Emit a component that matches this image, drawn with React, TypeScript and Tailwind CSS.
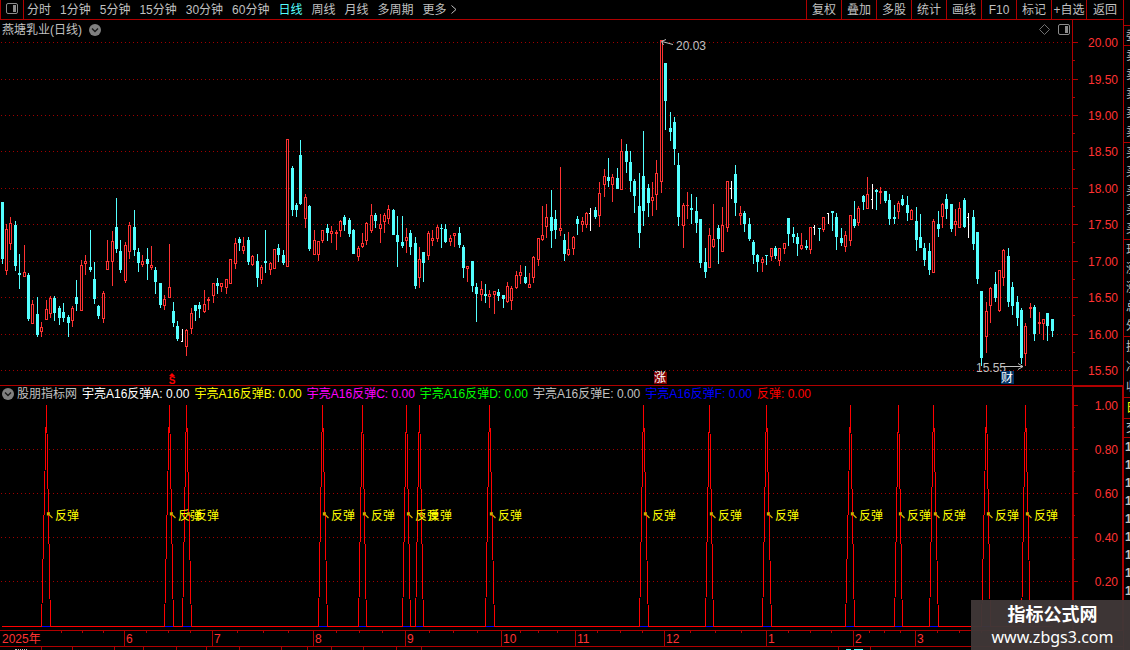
import React from "react";

type Kind = "u" | "d" | "w";
/* kind, x, high, low, body top, body bottom */
type Candle = [Kind, number, number, number, number, number];

const candles: Candle[] = [
  ["d", 2, 202, 264, 202, 259], ["u", 6, 224, 275, 229, 271], ["u", 10, 217, 250, 223, 244], ["d", 15, 221, 271, 225, 266],
  ["d", 19, 254, 289, 273, 275], ["u", 24, 245, 277, 272, 277], ["d", 28, 273, 321, 275, 319], ["u", 32, 300, 324, 304, 324],
  ["d", 37, 297, 337, 314, 335], ["u", 41, 322, 337, 327, 332], ["u", 46, 300, 320, 309, 320], ["u", 50, 296, 318, 298, 314],
  ["d", 54, 296, 321, 298, 313], ["d", 59, 306, 325, 308, 318], ["d", 63, 303, 322, 312, 318], ["d", 68, 315, 337, 317, 323],
  ["u", 72, 306, 327, 308, 321], ["d", 76, 280, 311, 297, 304], ["u", 81, 260, 311, 265, 311], ["u", 85, 255, 275, 261, 264],
  ["d", 90, 230, 272, 267, 270], ["d", 94, 262, 304, 279, 299], ["d", 98, 305, 319, 306, 316], ["u", 103, 291, 323, 293, 319],
  ["u", 107, 240, 270, 261, 270], ["u", 112, 231, 286, 241, 262], ["d", 116, 198, 253, 227, 249], ["d", 120, 240, 273, 251, 270],
  ["u", 125, 242, 283, 245, 281], ["u", 129, 222, 259, 225, 252], ["d", 134, 210, 256, 227, 250], ["d", 138, 248, 272, 252, 263],
  ["u", 142, 255, 267, 261, 265], ["d", 147, 248, 280, 259, 264], ["u", 151, 246, 270, 265, 268], ["d", 155, 267, 294, 270, 282],
  ["d", 160, 283, 308, 283, 305], ["u", 164, 295, 310, 299, 306], ["u", 169, 244, 298, 287, 298], ["d", 173, 302, 327, 311, 323],
  ["d", 177, 321, 341, 326, 339], ["w", 182, 329, 342, 341, 342], ["u", 186, 329, 356, 330, 347], ["u", 191, 308, 334, 313, 329],
  ["d", 195, 305, 321, 305, 311], ["d", 199, 302, 318, 305, 309], ["u", 204, 290, 313, 304, 312], ["u", 208, 297, 310, 299, 301],
  ["u", 213, 283, 303, 283, 296], ["d", 217, 278, 294, 283, 286], ["u", 221, 283, 292, 283, 287], ["u", 226, 279, 294, 279, 288],
  ["u", 230, 259, 284, 259, 284], ["u", 235, 238, 269, 243, 264], ["d", 239, 237, 251, 239, 243], ["u", 243, 237, 254, 246, 251],
  ["d", 248, 237, 265, 240, 262], ["u", 252, 255, 266, 256, 265], ["d", 257, 254, 287, 261, 278], ["u", 261, 265, 284, 267, 280],
  ["d", 265, 230, 273, 261, 263], ["u", 270, 262, 275, 263, 270], ["u", 274, 249, 269, 249, 269], ["d", 278, 244, 262, 248, 255],
  ["d", 283, 250, 265, 255, 263], ["u", 287, 139, 267, 139, 267], ["d", 292, 166, 216, 168, 210], ["d", 296, 203, 217, 205, 210],
  ["d", 300, 140, 205, 155, 204], ["u", 305, 194, 228, 197, 219], ["d", 309, 205, 251, 206, 249], ["u", 314, 230, 255, 240, 255],
  ["u", 318, 241, 261, 241, 255], ["u", 322, 230, 243, 230, 241], ["d", 327, 224, 241, 228, 233], ["u", 331, 226, 243, 231, 234],
  ["u", 336, 230, 250, 232, 234], ["u", 340, 220, 237, 221, 231], ["d", 344, 215, 231, 217, 225], ["d", 349, 218, 237, 220, 234],
  ["d", 353, 229, 254, 230, 254], ["u", 358, 246, 261, 248, 257], ["u", 362, 233, 248, 243, 247], ["u", 366, 222, 245, 223, 241],
  ["u", 371, 204, 233, 215, 231], ["d", 375, 213, 228, 215, 221], ["u", 380, 214, 243, 224, 229], ["u", 384, 213, 233, 215, 222],
  ["u", 388, 205, 224, 209, 219], ["d", 393, 209, 235, 210, 235], ["d", 397, 216, 267, 235, 242], ["d", 402, 216, 248, 242, 246],
  ["u", 406, 228, 253, 237, 241], ["d", 410, 230, 255, 233, 247], ["d", 415, 237, 289, 243, 286], ["u", 419, 247, 288, 259, 278],
  ["d", 423, 252, 282, 252, 263], ["u", 428, 231, 260, 233, 256], ["u", 432, 230, 246, 238, 241], ["u", 437, 225, 242, 227, 239],
  ["d", 441, 224, 248, 228, 229], ["d", 445, 224, 243, 229, 242], ["u", 450, 235, 246, 238, 242], ["u", 454, 233, 247, 233, 236],
  ["d", 459, 227, 248, 233, 245], ["d", 463, 245, 278, 247, 268], ["u", 467, 266, 282, 266, 269], ["d", 472, 261, 292, 261, 286],
  ["d", 476, 283, 322, 287, 294], ["u", 481, 281, 301, 289, 295], ["d", 485, 284, 303, 294, 296], ["u", 489, 290, 308, 294, 297],
  ["u", 494, 291, 314, 291, 295], ["d", 498, 289, 301, 292, 296], ["d", 503, 295, 308, 295, 299], ["u", 507, 282, 303, 286, 302],
  ["u", 511, 286, 310, 288, 301], ["u", 516, 271, 289, 275, 288], ["u", 520, 265, 284, 272, 276], ["d", 525, 266, 284, 277, 283],
  ["u", 529, 273, 288, 284, 288], ["u", 533, 256, 283, 257, 278], ["u", 538, 238, 266, 238, 260], ["u", 542, 206, 241, 235, 240],
  ["u", 546, 204, 238, 217, 227], ["d", 551, 190, 248, 217, 231], ["d", 555, 210, 239, 219, 230], ["u", 560, 167, 236, 228, 231],
  ["d", 564, 234, 261, 240, 254], ["u", 568, 232, 256, 249, 255], ["u", 573, 236, 255, 237, 249], ["d", 577, 216, 235, 219, 224],
  ["u", 582, 217, 232, 221, 225], ["u", 586, 212, 228, 213, 225], ["w", 590, 208, 231, 213, 214], ["d", 595, 207, 219, 210, 217],
  ["u", 599, 182, 227, 193, 216], ["u", 604, 169, 197, 176, 185], ["d", 608, 158, 187, 177, 181], ["u", 612, 174, 202, 177, 185],
  ["d", 617, 168, 189, 178, 189], ["u", 621, 139, 190, 151, 190], ["d", 626, 144, 173, 151, 162], ["d", 630, 151, 192, 162, 181],
  ["d", 634, 179, 213, 181, 196], ["d", 639, 173, 248, 206, 233], ["d", 643, 131, 226, 176, 211], ["d", 648, 184, 217, 188, 203],
  ["u", 652, 182, 216, 197, 201], ["u", 656, 160, 210, 173, 195], ["u", 661, 40, 193, 40, 182], ["d", 665, 63, 130, 63, 101],
  ["d", 670, 112, 141, 128, 132], ["d", 674, 117, 165, 122, 149], ["d", 678, 153, 226, 165, 217], ["u", 683, 203, 248, 205, 226],
  ["u", 687, 192, 219, 205, 206], ["d", 691, 194, 224, 208, 210], ["d", 696, 197, 233, 211, 223], ["d", 700, 219, 268, 219, 263],
  ["d", 705, 248, 278, 262, 272], ["u", 709, 228, 268, 235, 268], ["u", 713, 204, 248, 239, 247], ["d", 718, 225, 264, 228, 239],
  ["u", 722, 207, 252, 225, 252], ["u", 727, 181, 232, 181, 228], ["w", 731, 181, 199, 188, 189], ["d", 735, 165, 216, 174, 203],
  ["u", 740, 206, 225, 213, 216], ["d", 744, 211, 232, 213, 224], ["d", 749, 218, 241, 224, 239], ["d", 753, 240, 264, 242, 255],
  ["d", 757, 254, 272, 255, 262], ["u", 762, 257, 272, 259, 263], ["d", 766, 255, 265, 255, 256], ["u", 771, 248, 261, 248, 257],
  ["d", 775, 246, 259, 248, 256], ["u", 779, 248, 266, 248, 261], ["u", 784, 243, 254, 243, 249], ["d", 788, 218, 246, 218, 234],
  ["d", 793, 227, 243, 234, 237], ["d", 797, 233, 256, 237, 244], ["u", 801, 233, 250, 245, 249], ["d", 806, 240, 250, 246, 248],
  ["u", 810, 227, 254, 227, 250], ["w", 814, 225, 235, 227, 228], ["d", 819, 228, 241, 228, 229], ["u", 823, 217, 232, 217, 230],
  ["w", 828, 213, 224, 213, 214], ["d", 832, 211, 231, 211, 213], ["d", 836, 213, 250, 217, 237], ["d", 841, 228, 246, 238, 243],
  ["u", 845, 231, 252, 235, 247], ["u", 850, 215, 246, 215, 241], ["d", 854, 201, 228, 219, 226], ["u", 858, 206, 226, 208, 223],
  ["d", 863, 195, 210, 196, 202], ["u", 867, 177, 209, 194, 209], ["w", 872, 184, 209, 199, 200], ["d", 876, 189, 210, 190, 192],
  ["u", 880, 187, 204, 191, 193], ["d", 885, 191, 203, 191, 201], ["d", 889, 194, 225, 200, 219], ["d", 894, 205, 224, 217, 219],
  ["u", 898, 201, 219, 203, 212], ["d", 902, 195, 206, 199, 205], ["d", 907, 196, 221, 205, 213], ["u", 911, 209, 220, 210, 220],
  ["d", 916, 207, 251, 221, 240], ["d", 920, 214, 248, 237, 248], ["d", 924, 243, 266, 248, 260], ["d", 929, 243, 275, 251, 270],
  ["u", 933, 219, 273, 221, 273], ["d", 938, 211, 237, 224, 229], ["u", 942, 203, 228, 204, 217], ["d", 946, 194, 219, 199, 209],
  ["d", 951, 204, 232, 204, 229], ["u", 955, 209, 236, 221, 225], ["u", 959, 202, 228, 208, 228], ["d", 964, 198, 228, 200, 227],
  ["w", 968, 213, 238, 217, 218], ["d", 973, 210, 250, 217, 244], ["d", 977, 232, 284, 232, 279], ["d", 981, 291, 366, 291, 358],
  ["u", 986, 302, 353, 311, 337], ["u", 990, 287, 323, 288, 306], ["d", 995, 272, 302, 284, 298], ["u", 999, 270, 312, 270, 311],
  ["u", 1003, 249, 286, 250, 278], ["d", 1008, 248, 307, 256, 302], ["d", 1012, 282, 315, 287, 306], ["d", 1017, 296, 326, 302, 318],
  ["d", 1021, 308, 364, 310, 358], ["u", 1025, 323, 366, 326, 354], ["u", 1030, 303, 318, 307, 309], ["d", 1034, 305, 341, 307, 334],
  ["u", 1039, 312, 334, 322, 324], ["u", 1043, 319, 340, 319, 324], ["d", 1047, 313, 341, 313, 326], ["d", 1052, 319, 337, 319, 331],
];

const xs = candles.map((c) => c[1]);
const signals = [46, 169, 186, 322, 362, 406, 419, 489, 643, 709, 766, 850, 898, 933, 986, 1025];

const priceAxis: [string, number][] = [
  ["20.00", 42], ["19.50", 79], ["19.00", 115], ["18.50", 151], ["18.00", 188],
  ["17.50", 224], ["17.00", 261], ["16.50", 297], ["16.00", 334], ["15.50", 370],
];
const valueAxis: [string, number][] = [["1.00", 405], ["0.80", 449], ["0.60", 493], ["0.40", 537], ["0.20", 581]];
const months: [string, number][] = [
  ["2025年", 0], ["6", 124], ["7", 212], ["8", 313], ["9", 405], ["10", 501],
  ["11", 575], ["12", 664], ["1", 766], ["2", 853], ["3", 915], ["", 1003],
];

const periods = ["分时", "1分钟", "5分钟", "15分钟", "30分钟", "60分钟", "日线", "周线", "月线", "多周期"];
const actions = ["复权", "叠加", "多股", "统计", "画线", "F10", "标记", "+自选"];

const legend: [string, string][] = [
  ["宇亮A16反弹A: 0.00", "text-[#ffffff]"],
  ["宇亮A16反弹B: 0.00", "text-[#ffff00]"],
  ["宇亮A16反弹C: 0.00", "text-[#ff00ff]"],
  ["宇亮A16反弹D: 0.00", "text-[#00ff00]"],
  ["宇亮A16反弹E: 0.00", "text-[#c0c0c0]"],
  ["宇亮A16反弹F: 0.00", "text-[#0000ff]"],
  ["反弹: 0.00", "text-[#ff0000]"],
];

function CandleMark({ c }: { c: Candle }) {
  const [kind, x, high, low, top, bottom] = c;
  if (kind === "d") {
    return (
      <g fill="#54ffff">
        <rect x={x} y={high} width={1} height={low - high} />
        <rect x={x - 1} y={top} width={3} height={bottom - top} />
      </g>
    );
  }
  if (kind === "w") {
    return (
      <g fill="#ffffff">
        <rect x={x} y={high} width={1} height={low - high} />
        <rect x={x - 1} y={top} width={1} height={1} />
      </g>
    );
  }
  return (
    <g fill="#ff3232">
      <rect x={x} y={high} width={1} height={low - high} />
      <rect x={x - 1} y={top} width={3} height={bottom - top} />
      {bottom - top > 2 && <rect x={x} y={top + 1} width={1} height={bottom - top - 2} fill="#000" />}
    </g>
  );
}

function PanelIcon() {
  return (
    <svg width="12" height="11" viewBox="0 0 12 11" aria-hidden="true">
      <rect x="0.5" y="0.5" width="11" height="10" rx="1.5" fill="none" stroke="#8c8c8c" />
      <rect x="7" y="2" width="3" height="7" fill="#8c8c8c" />
    </svg>
  );
}

function RoundChevron() {
  return (
    <svg width="12" height="12" viewBox="0 0 12 12" aria-hidden="true">
      <circle cx="6" cy="6" r="6" fill="#808080" />
      <path d="M3 4.5 L6 7.5 L9 4.5" fill="none" stroke="#1a1a1a" strokeWidth="1.4" />
    </svg>
  );
}

function Toolbar() {
  return (
    <header className="flex h-5 shrink-0 items-stretch border-b border-[#b00000] text-[#c0c0c0]">
      <button aria-label="面板" className="flex w-6 shrink-0 items-center justify-center border-x border-[#b00000] pb-0.5">
        <PanelIcon />
      </button>
      <nav className="flex items-center gap-[9px] pl-[3px] leading-[18px]">
        {periods.map((p) => (
          <button key={p} className={p === "日线" ? "text-[#54ffff]" : ""}>
            {p}
          </button>
        ))}
        <button className="flex items-center gap-1">
          更多
          <svg width="6" height="9" viewBox="0 0 6 9" aria-hidden="true">
            <path d="M0.5 0.5 L5 4.5 L0.5 8.5" fill="none" stroke="#c0c0c0" />
          </svg>
        </button>
      </nav>
      <div className="ml-auto flex leading-[18px]">
        {actions.map((a) => (
          <button key={a} className="w-[35px] border-l border-[#b00000] text-center whitespace-nowrap">
            {a}
          </button>
        ))}
        <button className="w-[37px] border-l border-[#b00000] text-center">返回</button>
      </div>
    </header>
  );
}

function AxisMarks({ rows, half }: { rows: [string, number][]; half: number }) {
  return (
    <g fill="#b00000">
      {rows.map(([label, y]) => (
        <g key={label}>
          <rect x={1073} y={y} width={5} height={1} />
          <rect x={1073} y={y + half} width={2} height={1} />
          <text x={1118} y={y + 5} textAnchor="end" fill="#ff3232">
            {label}
          </text>
        </g>
      ))}
    </g>
  );
}

function PriceChart() {
  return (
    <section className="relative">
      <svg viewBox="0 20 1123 366" className="block h-auto w-full text-xs" role="img" aria-label="日线">
        <g shapeRendering="crispEdges">
          {priceAxis.map(([label, y]) => (
            <line key={label} x1="1" x2="1072" y1={y + 0.5} y2={y + 0.5} stroke="#a00000" strokeDasharray="1 3" />
          ))}
          {candles.map((c) => (
            <CandleMark key={c[1]} c={c} />
          ))}
          <rect x="1072" y="20" width="1" height="365" fill="#b00000" />
          <rect x="0" y="385" width="1123" height="1" fill="#b00000" />
        </g>
        <AxisMarks rows={priceAxis} half={18} />
        <g fill="none" stroke="#c0c0c0">
          <path d="M673 44.5 L662 41.5 M666 39.5 L661.5 41.5 L663.5 45" />
          <path d="M1001 366.5 H1023 M1018 363.5 L1023 366.5 L1018 369.5" />
        </g>
        <text x="676" y="50" fill="#c0c0c0">20.03</text>
        <text x="976" y="372" fill="#c0c0c0">15.55</text>
        <g fill="#ff0000">
          <path d="M169 376 L172 373 L175 376 Z" />
          <text x="172" y="384" textAnchor="middle" className="text-[10px] font-bold">S</text>
        </g>
        <rect x="654" y="372" width="13" height="12" fill="#800000" />
        <text x="660" y="382" textAnchor="middle" fill="#fff">涨</text>
        <rect x="1001" y="371" width="13" height="13" fill="#003366" />
        <text x="1007" y="382" textAnchor="middle" fill="#fff">财</text>
      </svg>
      <div className="absolute inset-x-0 top-0 flex h-[19px] items-center justify-between pr-[53px] pl-0.5 text-[#c0c0c0]">
        <h1 className="flex items-center gap-[7px]">
          燕塘乳业(日线)
          <button aria-label="展开">
            <RoundChevron />
          </button>
        </h1>
        <div className="flex items-center gap-2">
          <svg width="11" height="11" viewBox="0 0 11 11" aria-hidden="true">
            <path d="M5.5 0.5 L10.5 5.5 L5.5 10.5 L0.5 5.5 Z" fill="none" stroke="#707070" />
          </svg>
          <PanelIcon />
        </div>
      </div>
    </section>
  );
}

function SignalChart() {
  const base = 626;
  const spans = signals.map((x) => {
    const i = xs.indexOf(x);
    return { x, left: xs[i - 1], right: xs[i + 1] };
  });
  return (
    <section className="relative">
      <svg viewBox="0 386 1123 244" className="block h-auto w-full text-xs" role="img" aria-label="反弹">
        <g shapeRendering="crispEdges">
          {valueAxis.slice(1).map(([label, y]) => (
            <line key={label} x1="1" x2="1072" y1={y + 0.5} y2={y + 0.5} stroke="#a00000" strokeDasharray="1 3" />
          ))}
          <rect x="2" y={base} width="1051" height="1" fill="#ff0000" />
          {spans.map((s) => (
            <g key={s.x}>
              <rect x={s.left + 1} y={base} width={s.right - s.left - 1} height="1" fill="#0000ff" />
              <polyline
                points={`${s.left + 0.5},${base} ${s.x + 0.5},405 ${s.right + 0.5},${base}`}
                fill="none"
                stroke="#ff0000"
              />
            </g>
          ))}
          <rect x="1072" y="386" width="2" height="244" fill="#b00000" />
          <rect x="1122" y="386" width="1" height="244" fill="#b00000" />
          <rect x="1072" y="386" width="51" height="1" fill="#b00000" />
        </g>
        <AxisMarks rows={valueAxis} half={22} />
        {signals.map((x) => (
          <g key={x}>
            <path
              d={`M${x + 1.5} 513 L${x + 6.5} 518 M${x + 1.5} 515.5 V513 H${x + 4}`}
              fill="none"
              stroke="#d0b000"
              strokeWidth="1.3"
            />
            <text x={x + 9} y="520" fill="#ffff00">反弹</text>
          </g>
        ))}
      </svg>
      <div className="absolute inset-x-0 top-0 flex h-4 items-center gap-[5px] pl-0.5 leading-4 whitespace-nowrap">
        <div className="flex items-center gap-[3px] text-[#c0c0c0]">
          <button aria-label="展开">
            <RoundChevron />
          </button>
          股朋指标网
        </div>
        {legend.map(([text, color]) => (
          <span key={text} className={color}>
            {text}
          </span>
        ))}
      </div>
    </section>
  );
}

function TimeAxis() {
  return (
    <svg viewBox="0 630 1123 17" className="block h-auto w-full text-xs" role="img" aria-label="时间">
      <g fill="#b00000" shapeRendering="crispEdges">
        <rect x="0" y="630" width="1123" height="1" />
        <rect x="0" y="646" width="1123" height="1" />
        {months.map(([m, x], i) => {
          const next = i + 1 < months.length ? months[i + 1][1] : 1072;
          const start = i === 0 ? 40 : x;
          const step = (next - start) / 4;
          return (
            <g key={m + x}>
              {i > 0 && <rect x={x} y="631" width="1" height="15" />}
              {[1, 2, 3].map((k) => (
                <rect key={k} x={Math.round(start + step * k)} y="631" width="1" height="2" />
              ))}
            </g>
          );
        })}
      </g>
      {months.map(([m, x]) => (
        <text key={m + x} x={x + 2} y="643" fill="#ff3232">
          {m}
        </text>
      ))}
    </svg>
  );
}

function BottomTabs() {
  const widths = [42, 31, 42, 29, 33, 30, 33, 42, 26, 24, 32, 33, 25, 417, 32];
  const last = widths.length - 1;
  return (
    <div className="flex min-h-0 flex-1 overflow-hidden" aria-hidden="true">
      {widths.map((w, i) => (
        <div
          key={i}
          className="flex h-full shrink-0 items-end justify-center gap-[3px] border-r border-[#b00000]"
          style={{ width: w }}
        >
          {i === 0 && <i className="w-3 border-b border-dotted border-[#c0c0c0]" />}
          {i === last && <i className="h-px w-[5px] bg-[#54ffff]" />}
          {i === last && <i className="h-px w-[9px] bg-[#54ffff]" />}
        </div>
      ))}
    </div>
  );
}

function SideStrip() {
  const groups = [
    { h: "h-[20px]", rows: ["委"] },
    { h: "h-[97px]", rows: ["卖", "卖", "卖", "卖", "卖"] },
    { h: "h-[97px]", rows: ["买", "买", "买", "买", "买"] },
    { h: "h-[97px]", rows: ["现", "涨", "涨", "总", "外"] },
    { h: "h-[61px]", rows: ["换", "净", "收"] },
    { h: "h-[21px]", rows: ["日"] },
    { h: "h-[19px]", rows: ["交"] },
  ];
  return (
    <aside className="flex w-[7px] shrink-0 flex-col overflow-hidden border-l border-[#b00000] pt-[25px] text-[#c0c0c0]">
      {groups.map((g, i) => (
        <div
          key={i}
          className={`${g.h} flex shrink-0 flex-col justify-around overflow-hidden border-t border-[#b00000] pl-0.5 leading-4 ${i === 5 ? "text-[#ffff00]" : ""}`}
        >
          {g.rows.map((r, k) => (
            <span key={k}>{r}</span>
          ))}
        </div>
      ))}
      <div className="flex flex-col border-t border-[#b00000] pl-px leading-[18px] font-bold">
        {Array.from({ length: 9 }, (_, i) => (
          <span key={i}>1</span>
        ))}
      </div>
    </aside>
  );
}

export default function App() {
  return (
    <div className="relative flex h-screen overflow-hidden bg-black font-['Liberation_Sans','Noto_Sans_CJK_SC',sans-serif] text-xs">
      <main className="flex min-w-0 flex-1 flex-col">
        <Toolbar />
        <PriceChart />
        <SignalChart />
        <TimeAxis />
        <BottomTabs />
      </main>
      <SideStrip />
      <div className="absolute right-0 bottom-0 flex h-[50px] w-[159px] flex-col items-center justify-center bg-[#3f3737]/97 pl-1 text-white">
        <strong className="text-lg leading-6">指标公式网</strong>
        <a href="#" className="font-['Noto_Sans',sans-serif] text-base leading-5">
          www.zbgs3.com
        </a>
      </div>
    </div>
  );
}
